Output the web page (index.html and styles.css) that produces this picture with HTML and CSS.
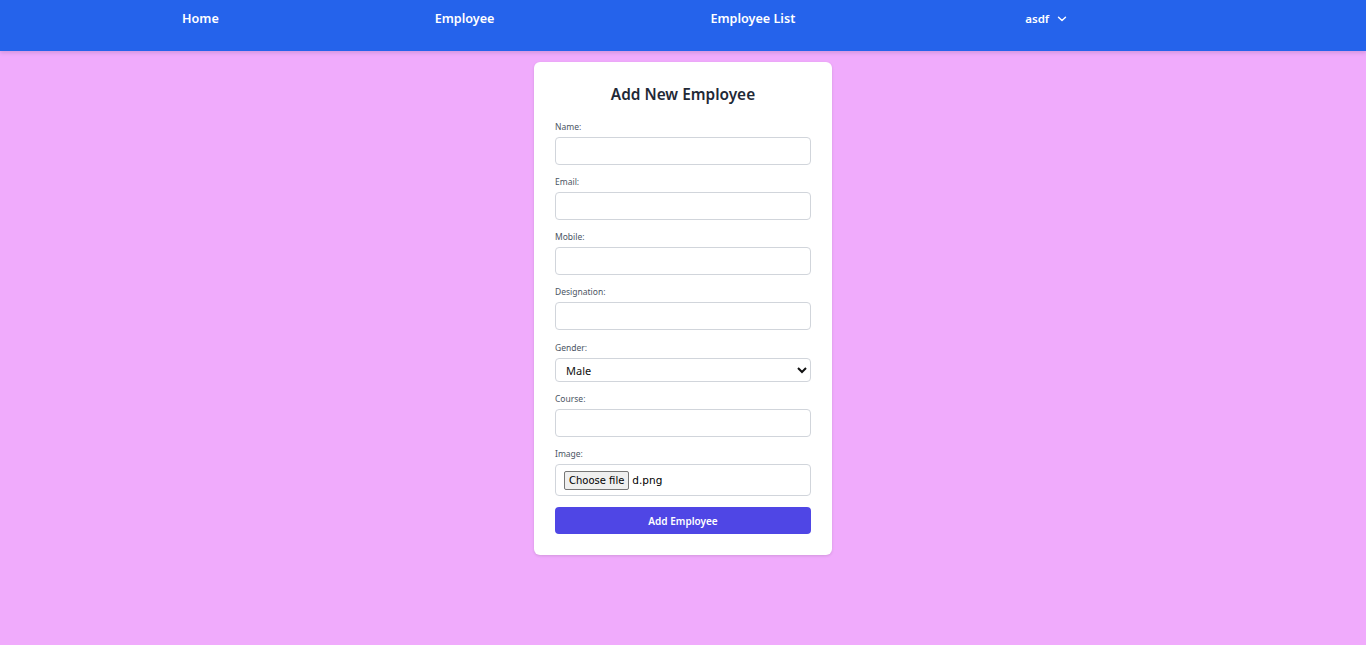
FILE: index.html
```html
<!DOCTYPE html>
<html lang="en">
<head>
<meta charset="utf-8">
<title>Add New Employee</title>
<link rel="stylesheet" href="styles.css">
</head>
<body>
<nav class="topbar">
  <ul class="nav-list">
    <li><a class="nav-link" href="#">Home</a></li>
    <li><a class="nav-link" href="#">Employee</a></li>
    <li><a class="nav-link" href="#">Employee List</a></li>
    <li>
      <button class="user-btn" type="button">asdf
        <svg class="chev" width="10" height="6" viewBox="0 0 10 6" fill="none" stroke="currentColor" stroke-width="1.4" stroke-linecap="round" stroke-linejoin="round"><path d="M1.5 1.2 5 4.6 8.5 1.2"/></svg>
      </button>
    </li>
  </ul>
</nav>
<main class="page">
  <form class="card">
    <h1 class="title">Add New Employee</h1>
    <div class="field">
      <label class="label">Name:</label>
      <input class="input" type="text">
    </div>
    <div class="field">
      <label class="label">Email:</label>
      <input class="input" type="email">
    </div>
    <div class="field">
      <label class="label">Mobile:</label>
      <input class="input" type="text">
    </div>
    <div class="field">
      <label class="label">Designation:</label>
      <input class="input" type="text">
    </div>
    <div class="field field-select">
      <label class="label">Gender:</label>
      <select class="select">
        <option>Male</option>
        <option>Female</option>
      </select>
    </div>
    <div class="field">
      <label class="label">Course:</label>
      <input class="input" type="text">
    </div>
    <div class="field field-file">
      <label class="label">Image:</label>
      <div class="file-box">
        <span class="file-btn">Choose file</span>
        <span class="file-name">d.png</span>
      </div>
    </div>
    <button class="submit" type="button">Add Employee</button>
  </form>
</main>
</body>
</html>
```
FILE: styles.css
```css
* { box-sizing: border-box; }
html, body { margin: 0; padding: 0; }
body {
  background: #f0abfc;
  font-family: "Noto Sans", "Open Sans", sans-serif;
  min-height: 645px;
}
.topbar {
  background: #2563eb;
  height: 51px;
  box-shadow: 0 2px 4px rgba(0,0,0,0.12);
}
.nav-list {
  list-style: none;
  margin: 0;
  padding: 8px 0 0 182px;
  display: flex;
  gap: 216px;
  align-items: center;
}
.nav-link {
  color: #fff;
  text-decoration: none;
  font-size: 12.6px;
  font-weight: 600;
  line-height: 22px;
  display: block;
}
.user-btn {
  background: none;
  border: 0;
  color: #fff;
  font-family: inherit;
  font-size: 11.5px;
  font-weight: 600;
  line-height: 22px;
  padding: 0 0 0 14px;
  display: flex;
  align-items: center;
  gap: 8px;
  margin-top: -1px;
}
.chev { display: block; }
.page {
  display: flex;
  justify-content: center;
  padding-top: 11px;
}
.card {
  width: 298px;
  background: #fff;
  border-radius: 6px;
  box-shadow: 0 1px 3px rgba(0,0,0,0.12);
  padding: 21px 21px 21px;
}
.title {
  margin: 0 0 13px;
  text-align: center;
  font-size: 15.4px;
  line-height: 24px;
  font-weight: 600;
  color: #1f2937;
}
.field { margin-bottom: 10px; }
.label {
  display: block;
  font-size: 8.5px;
  line-height: 14px;
  color: #4b5563;
  margin-bottom: 3px;
}
.input {
  display: block;
  width: 256px;
  height: 28px;
  border: 1px solid #d1d5db;
  border-radius: 4px;
  background: #fff;
  padding: 0 8px;
  font-family: inherit;
}
.field-select { padding-top: 1px; }
.select {
  display: block;
  width: 256px;
  height: 24px;
  border: 1px solid #d1d5db;
  border-radius: 4px;
  background: #fff;
  padding: 0 6px;
  font-family: inherit;
  font-size: 11px;
  color: #111;
}
.field-file { margin-bottom: 11px; }
.file-box {
  width: 256px;
  height: 32px;
  border: 1px solid #d1d5db;
  border-radius: 4px;
  display: flex;
  align-items: center;
  padding: 0 8px;
  gap: 3px;
}
.file-btn {
  font-family: "DejaVu Sans", sans-serif;
  font-size: 10px;
  line-height: 17px;
  padding: 0 4px;
  background: #efefef;
  border: 1px solid #767676;
  border-radius: 2px;
  color: #000;
}
.file-name {
  font-family: "DejaVu Sans", sans-serif;
  font-size: 10.5px;
  color: #000;
}
.submit {
  display: block;
  width: 256px;
  height: 27px;
  border: 0;
  border-radius: 4px;
  background: #4f46e5;
  color: #fff;
  font-family: inherit;
  font-size: 10px;
  font-weight: 600;
}
```
